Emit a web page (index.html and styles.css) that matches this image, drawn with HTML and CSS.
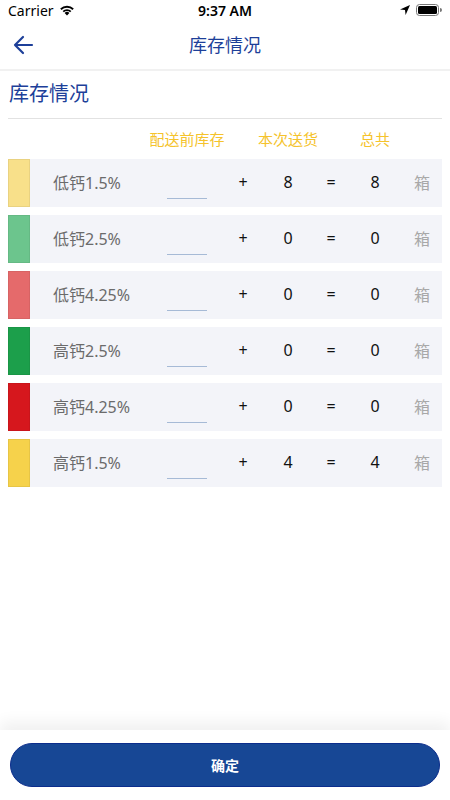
FILE: index.html
```html
<!DOCTYPE html>
<html lang="zh-CN">
<head>
    <meta charset="UTF-8" />
    <meta name="viewport" content="width=device-width, initial-scale=1.0" />
    <title>库存情况</title>
    <link rel="stylesheet" href="styles.css">
</head>
<body>
    <div class="status-bar">
        <div class="status-left">
            Carrier
            <svg class="wifi" width="16" height="12" viewBox="0 0 16 12">
                <path d="M8 11.5 L5.6 9 A3.4 3.4 0 0 1 10.4 9 Z" fill="#000"/>
                <path d="M3.6 7 A6.2 6.2 0 0 1 12.4 7 L11.1 8.3 A4.4 4.4 0 0 0 4.9 8.3 Z" fill="#000"/>
                <path d="M1.2 4.6 A9.6 9.6 0 0 1 14.8 4.6 L13.5 5.9 A7.8 7.8 0 0 0 2.5 5.9 Z" fill="#000"/>
            </svg>
        </div>
        <div class="status-time">9:37 AM</div>
        <div class="status-right">
            <svg width="12" height="12" viewBox="0 0 12 12">
                <path d="M11 1 L1 5.4 L6 6 L6.6 11 Z" fill="#000"/>
            </svg>
            <svg width="26" height="12" viewBox="0 0 26 12">
                <rect x="0.5" y="0.5" width="22" height="11" rx="3" fill="none" stroke="#777" stroke-width="1"/>
                <rect x="2" y="2" width="19" height="8" rx="1.5" fill="#000"/>
                <path d="M24 4 a1.6 1.6 0 0 1 0 4 Z" fill="#777"/>
            </svg>
        </div>
    </div>

    <header class="nav-bar">
        <button class="back-btn" aria-label="返回">
            <svg width="22" height="22" viewBox="0 0 22 22">
                <path d="M20 11 H3 M11 3 L3 11 L11 19" fill="none" stroke="#1d3f99" stroke-width="2.2" stroke-linecap="round" stroke-linejoin="round"/>
            </svg>
        </button>
        <h1 class="nav-title">库存情况</h1>
    </header>

    <main class="content">
        <h2 class="section-title">库存情况</h2>

        <div class="stock-grid stock-head">
            <span></span>
            <span></span>
            <span class="head-cell">配送前库存</span>
            <span></span>
            <span class="head-cell">本次送货</span>
            <span></span>
            <span class="head-cell">总共</span>
            <span></span>
        </div>

        <div class="stock-list">
            <div class="stock-grid stock-row">
                <span class="swatch swatch-low15"></span>
                <span class="name">低钙1.5%</span>
                <span class="cell"><span class="input-line"></span></span>
                <span class="cell">+</span>
                <span class="cell">8</span>
                <span class="cell">=</span>
                <span class="cell">8</span>
                <span class="cell unit">箱</span>
            </div>
            <div class="stock-grid stock-row">
                <span class="swatch swatch-low25"></span>
                <span class="name">低钙2.5%</span>
                <span class="cell"><span class="input-line"></span></span>
                <span class="cell">+</span>
                <span class="cell">0</span>
                <span class="cell">=</span>
                <span class="cell">0</span>
                <span class="cell unit">箱</span>
            </div>
            <div class="stock-grid stock-row">
                <span class="swatch swatch-low425"></span>
                <span class="name">低钙4.25%</span>
                <span class="cell"><span class="input-line"></span></span>
                <span class="cell">+</span>
                <span class="cell">0</span>
                <span class="cell">=</span>
                <span class="cell">0</span>
                <span class="cell unit">箱</span>
            </div>
            <div class="stock-grid stock-row">
                <span class="swatch swatch-high25"></span>
                <span class="name">高钙2.5%</span>
                <span class="cell"><span class="input-line"></span></span>
                <span class="cell">+</span>
                <span class="cell">0</span>
                <span class="cell">=</span>
                <span class="cell">0</span>
                <span class="cell unit">箱</span>
            </div>
            <div class="stock-grid stock-row">
                <span class="swatch swatch-high425"></span>
                <span class="name">高钙4.25%</span>
                <span class="cell"><span class="input-line"></span></span>
                <span class="cell">+</span>
                <span class="cell">0</span>
                <span class="cell">=</span>
                <span class="cell">0</span>
                <span class="cell unit">箱</span>
            </div>
            <div class="stock-grid stock-row">
                <span class="swatch swatch-high15"></span>
                <span class="name">高钙1.5%</span>
                <span class="cell"><span class="input-line"></span></span>
                <span class="cell">+</span>
                <span class="cell">4</span>
                <span class="cell">=</span>
                <span class="cell">4</span>
                <span class="cell unit">箱</span>
            </div>
        </div>
    </main>

    <footer class="footer">
        <button class="confirm-btn">确定</button>
    </footer>
</body>
</html>
```

FILE: styles.css
```css
* {
    box-sizing: border-box;
}

body {
    margin: 0;
    height: 800px;
    display: flex;
    flex-direction: column;
    font-family: "Noto Sans", "Noto Sans CJK SC", sans-serif;
    background-color: #ffffff;
    color: #000;
}

.status-bar {
    height: 20px;
    padding: 0 8px;
    display: flex;
    align-items: center;
    justify-content: space-between;
    font-size: 14px;
}

.status-left {
    display: flex;
    align-items: center;
    gap: 5px;
    width: 100px;
}

.status-time {
    font-weight: 600;
    font-size: 14px;
}

.status-right {
    width: 100px;
    display: flex;
    justify-content: flex-end;
    align-items: center;
    gap: 5px;
}

.nav-bar {
    height: 51px;
    display: flex;
    align-items: center;
    justify-content: center;
    border-bottom: 2px solid #f1f1f1;
    position: relative;
}

.back-btn {
    position: absolute;
    left: 12px;
    top: 14px;
    border: none;
    background: none;
    padding: 0;
    display: flex;
}

.nav-title {
    margin: 0 0 2px;
    font-size: 18px;
    font-weight: normal;
    color: #1d3f99;
}

.content {
    flex: 1;
    padding: 0 8px;
}

.section-title {
    margin: 0;
    height: 48px;
    line-height: 46px;
    padding-left: 1px;
    font-size: 20px;
    font-weight: normal;
    color: #1d3f99;
    border-bottom: 1px solid #e2e2e2;
}

.stock-grid {
    display: grid;
    grid-template-columns: 22px 120px 74px 38px 52px 34px 54px 40px;
    align-items: center;
}

.stock-head {
    height: 40px;
    font-size: 15px;
    color: #f5c32c;
}

.head-cell {
    display: flex;
    justify-content: center;
    white-space: nowrap;
    margin-bottom: 2px;
}

.stock-list {
    display: flex;
    flex-direction: column;
    gap: 8px;
}

.stock-row {
    height: 48px;
    background-color: #f3f4f9;
    font-size: 16px;
}

.swatch {
    height: 48px;
    border: 1px solid rgba(0, 0, 0, 0.06);
}

.swatch-low15 { background-color: #f8e08a; }
.swatch-low25 { background-color: #6cc58d; }
.swatch-low425 { background-color: #e56a6b; }
.swatch-high25 { background-color: #1c9f4b; }
.swatch-high425 { background-color: #d6171d; }
.swatch-high15 { background-color: #f6d24b; }

.name {
    padding-left: 23px;
    margin-bottom: 3px;
    color: #6b6b6b;
    white-space: nowrap;
}

.cell {
    display: flex;
    justify-content: center;
    margin-bottom: 3px;
    color: #111;
}

.cell .input-line {
    width: 40px;
    height: 30px;
    margin-top: 5px;
    border-bottom: 1px solid #a6bad6;
}

.unit {
    color: #a8a8a8;
}

.footer {
    padding: 13px 10px;
    background-color: #fff;
    box-shadow: 0 -8px 14px rgba(0, 0, 0, 0.06);
}

.confirm-btn {
    width: 100%;
    height: 44px;
    border-radius: 22px;
    border: 1px solid #0c2d8c;
    background-color: #174795;
    color: #fff;
    font-family: "Noto Sans CJK SC", sans-serif;
    font-size: 14px;
    font-weight: bold;
}
```
